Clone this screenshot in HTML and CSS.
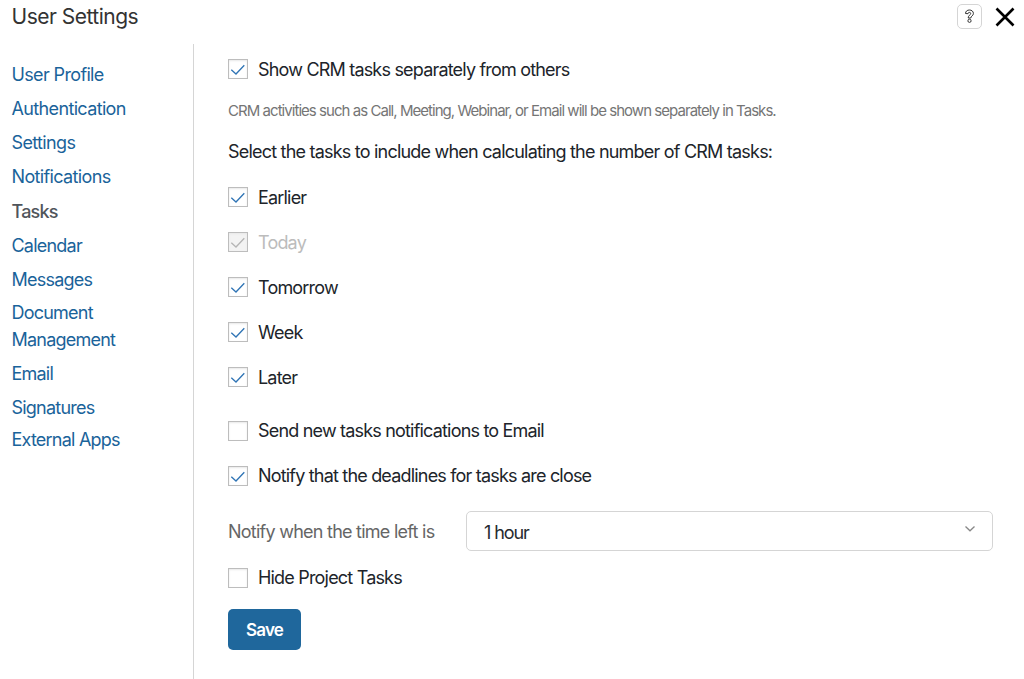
FILE: index.html
```
<!DOCTYPE html>
<html lang="en">
  <head>
    <meta charset="UTF-8" />
    <meta name="viewport" content="width=device-width, initial-scale=1.0" />
    <title>User Settings</title>
    <link rel="stylesheet" href="styles.css">
  </head>
  <body>
    <header class="header">
      <h1>User Settings</h1>
      <div class="header-buttons">
        <button type="button" class="help" aria-label="Help">
          <svg width="11" height="15" viewBox="0 0 11 15">
            <path class="help-line" d="M1.5 4.5C1.5 2.3 3.2 1 5.4 1s4 1.3 4 3.5c0 2.3-2.6 2.6-2.6 4.5H4.2c0-2.9 2.5-2.9 2.5-4.4 0-.8-.5-1.2-1.3-1.2s-1.3.4-1.4 1.3z" />
            <circle class="help-line" cx="5.5" cy="11.8" r="1.6" />
          </svg>
        </button>
        <button type="button" class="close" aria-label="Close">
          <svg width="20" height="20" viewBox="0 0 20 20">
            <path d="M1.5 1.5l17 17M18.5 1.5l-17 17" />
          </svg>
        </button>
      </div>
    </header>
    <div class="content">
      <nav class="menu">
        <a href="#" class="wide">User Profile</a>
        <a href="#" class="wide">Authentication</a>
        <a href="#" class="wide">Settings</a>
        <a href="#" class="wide">Notifications</a>
        <a href="#" class="active">Tasks</a>
        <a href="#">Calendar</a>
        <a href="#">Messages</a>
        <a href="#" class="two-lines">Document Management</a>
        <a href="#">Email</a>
        <a href="#">Signatures</a>
        <a href="#" class="last">External Apps</a>
      </nav>
      <form class="settings">
        <label class="check"><input type="checkbox" checked /><span>Show CRM tasks separately from others</span></label>
        <p class="hint">CRM activities such as Call, Meeting, Webinar, or Email will be shown separately in Tasks.</p>
        <p class="question">Select the tasks to include when calculating the number of CRM tasks:</p>
        <div class="group">
          <label class="check"><input type="checkbox" checked /><span>Earlier</span></label>
          <label class="check disabled"><input type="checkbox" checked disabled /><span>Today</span></label>
          <label class="check"><input type="checkbox" checked /><span>Tomorrow</span></label>
          <label class="check"><input type="checkbox" checked /><span>Week</span></label>
          <label class="check"><input type="checkbox" checked /><span>Later</span></label>
        </div>
        <div class="group notifications">
          <label class="check"><input type="checkbox" /><span>Send new tasks notifications to Email</span></label>
          <label class="check"><input type="checkbox" checked /><span>Notify that the deadlines for tasks are close</span></label>
        </div>
        <div class="field">
          <label for="time">Notify when the time left is</label>
          <select id="time" name="time">
            <option>1 hour</option>
          </select>
          <svg class="arrow" width="12" height="8" viewBox="0 0 12 8">
            <path d="M1.5 1.5L6 5.8l4.5-4.3" />
          </svg>
        </div>
        <label class="check"><input type="checkbox" /><span>Hide Project Tasks</span></label>
        <button type="button" class="save">Save</button>
      </form>
    </div>
  </body>
</html>
```
FILE: styles.css
```
* {
  box-sizing: border-box;
}

body {
  margin: 0;
  height: 679px;
  overflow: hidden;
  display: flex;
  flex-direction: column;
  background: #fff;
  color: #20242a;
  font-family: Inter, "Liberation Sans", sans-serif;
  font-size: 18px;
  letter-spacing: -0.81px;
}

h1,
p {
  margin: 0;
}

button,
select {
  font: inherit;
  letter-spacing: inherit;
}

.header {
  height: 44px;
  padding: 3px 9px 0 11.5px;
  display: flex;
  justify-content: space-between;
}

h1 {
  font-size: 21px;
  line-height: 27px;
  font-weight: 400;
  letter-spacing: -0.5px;
  color: #333;
}

.header-buttons {
  display: flex;
  gap: 13px;
}

.help {
  width: 25px;
  height: 25px;
  margin-top: 1px;
  padding: 0;
  display: flex;
  align-items: center;
  justify-content: center;
  border: 1px solid #d5d5d5;
  border-radius: 5px;
  background: #fff;
}

.help-line {
  fill: none;
  stroke: #333;
  stroke-width: 1;
}

.close {
  width: 20px;
  height: 20px;
  margin-top: 4px;
  padding: 0;
  border: 0;
  background: none;
}

.close svg {
  display: block;
}

.close path {
  stroke: #000;
  stroke-width: 2.6;
}

.content {
  flex: 1;
  display: flex;
}

.menu {
  width: 194px;
  padding: 17px 60px 0 11.5px;
  border-right: 1px solid #d5d5d5;
  letter-spacing: -0.78px;
}

.menu a {
  display: block;
  margin-bottom: 7.1px;
  line-height: 27px;
  color: #1a639a;
  text-decoration: none;
}

.menu .wide {
  letter-spacing: -0.64px;
}

.menu .active {
  padding-top: 0.5px;
  color: #50555b;
  font-weight: 500;
}

.menu .two-lines {
  margin-top: -1px;
}

.menu .last {
  margin-top: -2px;
}

.settings {
  flex: 1;
  padding: 15px 31px 0 34px;
}

.check {
  display: flex;
  align-items: center;
  gap: 10px;
  height: 20px;
}

.check span {
  padding-top: 1px;
}

.check input {
  appearance: none;
  width: 20px;
  height: 20px;
  margin: 0;
  border: 1px solid #bdbdbd;
  background: #fff;
  box-shadow: inset 0 1px 2px #e8e8e8;
}

.check input:checked {
  background: #fff url("data:image/svg+xml,%3Csvg xmlns='http://www.w3.org/2000/svg' width='18' height='18'%3E%3Cpath d='M2.3 9.7L7 14l8.3-8.8' fill='none' stroke='%232f74b5' stroke-width='1.3'/%3E%3C/svg%3E");
}

.disabled {
  color: #bcbcbc;
}

.check input:disabled {
  background: #f3f3f3 url("data:image/svg+xml,%3Csvg xmlns='http://www.w3.org/2000/svg' width='18' height='18'%3E%3Cpath d='M2.3 9.7L7 14l8.3-8.8' fill='none' stroke='%23b5b5b5' stroke-width='1.3'/%3E%3C/svg%3E");
}

.hint {
  margin-top: 22px;
  font-size: 15px;
  line-height: 20px;
  letter-spacing: -0.955px;
  color: #757575;
}

.question {
  margin-top: 18px;
  line-height: 26px;
  letter-spacing: -0.79px;
}

.group {
  margin-top: 22px;
  display: flex;
  flex-direction: column;
  gap: 25px;
}

.notifications {
  margin-top: 34px;
}

.notifications span {
  padding: 0 0 1px;
}

.field {
  position: relative;
  margin: 25px 0 17px;
  display: flex;
  align-items: center;
  color: #666;
}

.field label {
  width: 238px;
  padding-top: 1px;
  letter-spacing: -0.75px;
}

.field select {
  appearance: none;
  flex: 1;
  height: 40px;
  padding: 2px 17px 0;
  border: 1px solid #d5d5d5;
  border-radius: 5px;
  background: #fff;
  color: #262a30;
  letter-spacing: -1.1px;
}

.arrow {
  position: absolute;
  right: 17px;
  top: 14px;
}

.arrow path {
  fill: none;
  stroke: #888;
  stroke-width: 1.3;
}

.field + .check span {
  padding: 0 0 1px;
}

.save {
  width: 73px;
  height: 41px;
  margin-top: 21px;
  padding: 0;
  border: 0;
  border-radius: 5px;
  background: #1f679c;
  color: #fff;
  font-size: 17px;
  font-weight: 600;
}
```
